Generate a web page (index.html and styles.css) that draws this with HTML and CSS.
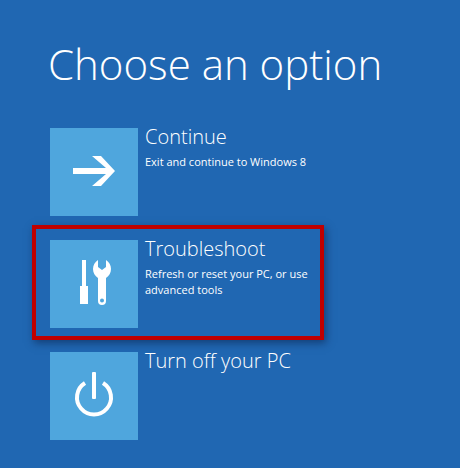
FILE: index.html
```html
<!DOCTYPE html>
<html lang="en">
<head>
    <meta charset="UTF-8">
    <title>Choose an option</title>
    <link rel="stylesheet" href="styles.css">
</head>
<body>
    <div class="screen">
        <h1>Choose an option</h1>
        <div class="options">
            <div class="option">
                <div class="tile">
                    <svg width="88" height="88" viewBox="0 0 88 88">
                        <path fill="#fff" d="M23 40h33l-14-12h9l14 15-14 15h-9l14-12H23z"/>
                    </svg>
                </div>
                <div class="option-text">
                    <div class="option-title">Continue</div>
                    <div class="option-desc">Exit and continue to Windows 8</div>
                </div>
            </div>
            <div class="option">
                <div class="tile">
                    <svg width="88" height="88" viewBox="0 0 88 88">
                        <path fill="#fff" d="M32 20h4v26h2v18h-8V46h2z"/>
                        <path fill="#fff" fill-rule="evenodd" d="M48 20c-3 2-5 5-5 9 0 4 2 7 5 9v23a4 4 0 0 0 8 0V38c3-2 5-5 5-9 0-4-2-7-5-9v7l-4 3-4-3zM52 58.500a2 2 0 1 1 0 4 2 2 0 0 1 0-4z"/>
                    </svg>
                </div>
                <div class="option-text">
                    <div class="option-title">Troubleshoot</div>
                    <div class="option-desc">Refresh or reset your PC, or use<br>advanced tools</div>
                </div>
                <div class="highlight"></div>
            </div>
            <div class="option">
                <div class="tile">
                    <svg width="88" height="88" viewBox="0 0 88 88">
                        <path fill="none" stroke="#fff" stroke-width="4" d="M35 31a17 17 0 1 0 18 0"/>
                        <rect x="42" y="20" width="4" height="27" rx="1" fill="#fff"/>
                    </svg>
                </div>
                <div class="option-text">
                    <div class="option-title">Turn off your PC</div>
                </div>
            </div>
        </div>
    </div>
</body>
</html>
```

FILE: styles.css
```css
* {
    margin: 0;
    padding: 0;
    box-sizing: border-box;
}

body {
    background-color: #2067b2;
    color: #ffffff;
    font-family: "Open Sans", "Noto Sans", sans-serif;
    overflow: hidden;
}

.screen {
    height: 468px;
    padding: 32px 0 0 50px;
}

h1 {
    font-size: 42px;
    font-weight: 300;
    line-height: 64px;
    margin-left: -2px;
    margin-bottom: 32px;
}

.options {
    display: flex;
    flex-direction: column;
    gap: 24px;
}

.option {
    position: relative;
    display: flex;
    gap: 7px;
}

.tile {
    width: 88px;
    height: 88px;
    flex-shrink: 0;
    background-color: #4fa6dd;
}

.tile svg {
    display: block;
}

.option-title {
    font-size: 20px;
    font-weight: 300;
    line-height: 18px;
    margin-bottom: 8px;
}

.option-desc {
    font-size: 11px;
    line-height: 16px;
}

/* red annotation box drawn over the screenshot */
.highlight {
    position: absolute;
    left: -18px;
    top: -15px;
    width: 292px;
    height: 115px;
    border: 4px solid #c00000;
    box-shadow: 2px 3px 8px rgba(10, 30, 70, 0.55);
}
```
